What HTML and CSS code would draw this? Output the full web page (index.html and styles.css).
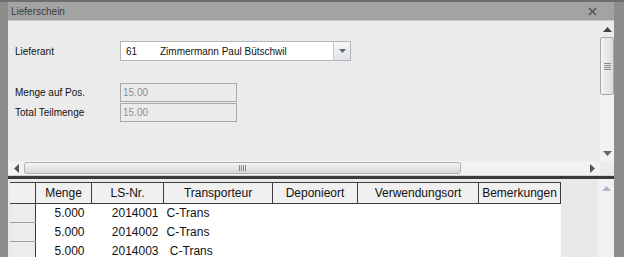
FILE: index.html
```html
<!DOCTYPE html>
<html>
<head>
<meta charset="utf-8">
<link rel="stylesheet" href="styles.css">
</head>
<body>
<div class="frame">
  <div class="titlebar">
    <span class="title">Lieferschein</span>
    <svg class="close" width="9" height="9" viewBox="0 0 9 9"><path d="M1 1 L8 8 M8 1 L1 8" stroke="#555" stroke-width="1.6"/></svg>
  </div>
  <div class="toppanel">
    <div class="form">
      <div class="row row-lief">
        <span class="label">Lieferant</span>
        <div class="combo">
          <span class="combo-text"><span class="num">61</span>Zimmermann Paul Bütschwil</span>
          <span class="combo-btn"><svg width="7" height="4" viewBox="0 0 7 4"><path d="M0 0 H7 L3.5 4 Z" fill="#666"/></svg></span>
        </div>
      </div>
      <div class="row row-menge">
        <span class="label">Menge auf Pos.</span>
        <div class="field">15.00</div>
      </div>
      <div class="row row-total">
        <span class="label">Total Teilmenge</span>
        <div class="field">15.00</div>
      </div>
    </div>
    <div class="vscroll">
      <div class="arrow up"><svg width="9" height="5" viewBox="0 0 9 5"><path d="M0 5 L4.5 0 L9 5 Z" fill="#444"/></svg></div>
      <div class="vthumb"><div class="grip-h"></div></div>
      <div class="vtrack"></div>
      <div class="arrow down"><svg width="9" height="5" viewBox="0 0 9 5"><path d="M0 0 H9 L4.5 5 Z" fill="#666"/></svg></div>
    </div>
    <div class="hscroll">
      <div class="harrow"><svg width="5" height="9" viewBox="0 0 5 9"><path d="M5 0 V9 L0 4.5 Z" fill="#555"/></svg></div>
      <div class="hthumb"><div class="grip-v"></div></div>
      <div class="htrack"></div>
      <div class="harrow"><svg width="5" height="9" viewBox="0 0 5 9"><path d="M0 0 V9 L5 4.5 Z" fill="#555"/></svg></div>
    </div>
    <div class="corner"></div>
  </div>
  <div class="splitter"></div>
  <div class="gridpanel">
    <div class="gridarea">
      <table class="grid">
        <thead>
          <tr>
            <th class="rh"></th>
            <th class="c-menge">Menge</th>
            <th class="c-ls">LS-Nr.</th>
            <th class="c-tr">Transporteur</th>
            <th class="c-dep">Deponieort</th>
            <th class="c-ver">Verwendungsort</th>
            <th class="c-bem">Bemerkungen</th>
          </tr>
        </thead>
        <tbody>
          <tr><td class="rh"></td><td class="num-r">5.000</td><td class="num-r">2014001</td><td class="txt">C-Trans</td><td></td><td></td><td></td></tr>
          <tr><td class="rh"></td><td class="num-r">5.000</td><td class="num-r">2014002</td><td class="txt">C-Trans</td><td></td><td></td><td></td></tr>
          <tr><td class="rh"></td><td class="num-r">5.000</td><td class="num-r">2014003</td><td class="txt">&nbsp;C-Trans</td><td></td><td></td><td></td></tr>
        </tbody>
      </table>
    </div>
    <div class="gvscroll">
      <div class="arrow up"><svg width="9" height="5" viewBox="0 0 9 5"><path d="M0 5 L4.5 0 L9 5 Z" fill="#aab6c6"/></svg></div>
    </div>
  </div>
</div>
</body>
</html>
```
FILE: styles.css
```css
html, body {
  margin: 0;
  padding: 0;
  width: 624px;
  height: 257px;
  overflow: hidden;
  background: #8d8d8d;
  font-family: "Liberation Sans", Arial, sans-serif;
}
.frame {
  height: 257px;
  box-sizing: border-box;
  border-top: 2px solid #6e6e6e;
  padding: 0 10px 0 8px;
  display: flex;
  flex-direction: column;
}
.titlebar {
  height: 18px;
  flex: none;
  background: #a3a4a2;
  border-bottom: 1px solid #c9c9c9;
  display: flex;
  align-items: center;
  justify-content: space-between;
  padding: 0 17px 0 3px;
}
.title {
  font-size: 10px;
  color: #3c3c3c;
}
.close { display: block; }
.toppanel {
  flex: none;
  height: 154px;
  background: #ebebeb;
  display: grid;
  grid-template-columns: 1fr 14px;
  grid-template-rows: 1fr 14px;
}
.form {
  padding: 20px 0 0 7px;
  font-size: 10px;
  color: #111;
}
.row {
  display: flex;
  align-items: center;
}
.label {
  width: 105px;
}
.row-lief { height: 20px; }
.row-menge { margin-top: 22px; height: 19px; }
.row-total { margin-top: 1px; height: 19px; }
.combo {
  width: 231px;
  height: 20px;
  box-sizing: border-box;
  border: 1px solid #b5b5b5;
  background: #fff;
  display: flex;
}
.combo-text {
  flex: 1;
  display: flex;
  align-items: center;
  padding-left: 5px;
}
.num { width: 34px; }
.combo-btn {
  width: 16px;
  border-left: 1px solid #c4c8cc;
  background: linear-gradient(#f6f7f9, #dfe3e8);
  display: flex;
  align-items: center;
  justify-content: center;
}
.field {
  width: 117px;
  height: 19px;
  box-sizing: border-box;
  border: 1px solid #a8a8a8;
  background: #ebebeb;
  color: #8e8e8e;
  padding-left: 2px;
  display: flex;
  align-items: center;
}
.vscroll {
  display: flex;
  flex-direction: column;
  background: #f2f2f2;
}
.arrow {
  height: 16px;
  display: flex;
  align-items: center;
  justify-content: center;
  flex: none;
}
.vscroll .up { background: #ebebeb; }
.vthumb {
  height: 58px;
  box-sizing: border-box;
  border: 1px solid #a9a9a9;
  border-radius: 2px;
  background: linear-gradient(90deg, #f4f4f4, #dcdcdc);
  display: flex;
  justify-content: center;
  align-items: center;
  flex: none;
}
.grip-h {
  width: 7px;
  height: 7px;
  background: repeating-linear-gradient(#888 0 1px, transparent 1px 2px);
}
.vtrack { flex: 1; }
.hscroll {
  display: flex;
  align-items: center;
  background: #f2f2f2;
}
.harrow {
  width: 16px;
  height: 14px;
  display: flex;
  align-items: center;
  justify-content: center;
  flex: none;
}
.hthumb {
  width: 437px;
  height: 12px;
  box-sizing: border-box;
  border: 1px solid #b0b0b0;
  border-radius: 3px;
  background: linear-gradient(#f5f5f5, #d6d6d6);
  display: flex;
  justify-content: center;
  align-items: center;
  flex: none;
}
.grip-v {
  width: 7px;
  height: 6px;
  background: repeating-linear-gradient(90deg, #888 0 1px, transparent 1px 2px);
}
.htrack { flex: 1; }
.corner { background: #ebebeb; }
.splitter {
  height: 4px;
  flex: none;
  box-sizing: border-box;
  border-top: 1px solid #d2d2d2;
  background: #3a3a3a;
}
.gridpanel {
  flex: 1;
  display: flex;
  background: #e9e9e9;
}
.gridarea {
  flex: 1;
  padding: 3px 0 0 2px;
}
.grid {
  border-collapse: collapse;
  table-layout: fixed;
  font-size: 12px;
  color: #111;
}
.grid th {
  height: 21px;
  padding: 0;
  box-sizing: border-box;
  border: 1px solid #3c3c3c;
  background: #f0f0f0;
  font-weight: normal;
  text-align: center;
}
.grid th.rh { border-left: none; }
.grid td {
  height: 18px;
  padding: 0;
  background: #fff;
  white-space: pre;
}
.grid td.rh {
  background: #ececec;
  border-bottom: 1px solid #a0a0a0;
  border-right: 1px solid #3c3c3c;
}
.rh { width: 25px; }
.c-menge { width: 56px; }
.c-ls { width: 72px; }
.c-tr { width: 109px; }
.c-dep { width: 85px; }
.c-ver { width: 121px; }
.c-bem { width: 82px; }
.num-r { text-align: right; padding-right: 7px !important; }
.grid td.num-r + td.num-r { padding-right: 5px !important; }
.txt { padding-left: 3px !important; }
.gvscroll {
  width: 16px;
  background: #f1f1f1;
  flex: none;
}
.gvscroll .up { height: 18px; }
```
